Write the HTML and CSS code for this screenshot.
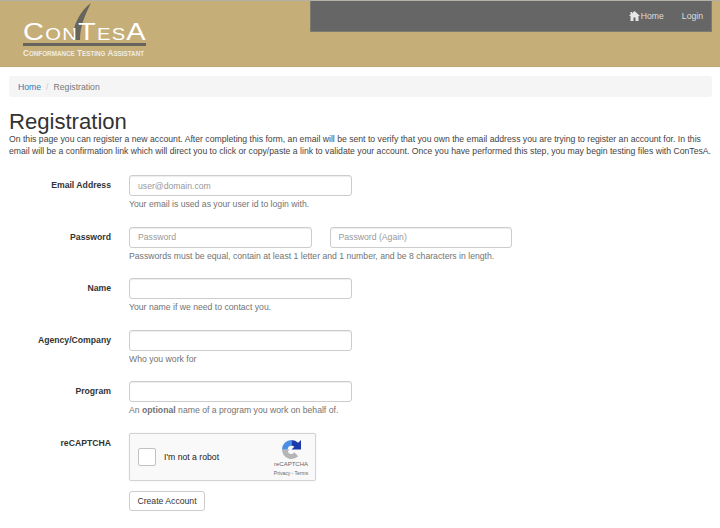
FILE: index.html
```html
<!DOCTYPE html>
<html lang="en">
<head>
<meta charset="utf-8">
<title>Registration</title>
<link rel="stylesheet" href="styles.css">
</head>
<body>
<header class="header">
  <a class="logo" href="#">
    <svg class="logo-tick" width="24" height="37" viewBox="0 0 24 37"><path d="M3 37C4 22 11 8 22 0C17 10 11 22 11 37Z" fill="#66645c"/></svg>
    <span class="logo-word"><span>C</span><small>ON</small><span>T</span><small>ES</small><span>A</span></span>
    <span class="logo-rule"></span>
    <span class="logo-sub">C<small>ONFORMANCE</small> T<small>ESTING</small> A<small>SSISTANT</small></span>
  </a>
  <nav class="nav">
    <a class="nav-link" href="#"><svg class="home-icon" width="11" height="10" viewBox="0 0 11 10"><path d="M5.500 0L11 5H9.500V10H6.500V6.500H4.500V10H1.500V5H0L1.500 3.600V1H3V2.300Z" fill="#e6e6e6"/></svg>Home</a>
    <a class="nav-link" href="#">Login</a>
  </nav>
</header>
<main class="main">
  <ol class="crumbs">
    <li><a href="#">Home</a></li>
    <li class="sep">/</li>
    <li class="current">Registration</li>
  </ol>
  <h1 class="title">Registration</h1>
  <p class="intro">On this page you can register a new account. After completing this form, an email will be sent to verify that you own the email address you are trying to register an account for. In this email will be a confirmation link which will direct you to click or copy/paste a link to validate your account. Once you have performed this step, you may begin testing files with ConTesA.</p>
  <form class="form">
    <div class="row">
      <label class="label">Email Address</label>
      <div class="field">
        <input class="input wide" placeholder="user@domain.com">
        <p class="help">Your email is used as your user id to login with.</p>
      </div>
    </div>
    <div class="row">
      <label class="label">Password</label>
      <div class="field">
        <div class="pair">
          <input class="input half" placeholder="Password">
          <input class="input half" placeholder="Password (Again)">
        </div>
        <p class="help">Passwords must be equal, contain at least 1 letter and 1 number, and be 8 characters in length.</p>
      </div>
    </div>
    <div class="row">
      <label class="label">Name</label>
      <div class="field">
        <input class="input wide">
        <p class="help">Your name if we need to contact you.</p>
      </div>
    </div>
    <div class="row">
      <label class="label">Agency/Company</label>
      <div class="field">
        <input class="input wide">
        <p class="help">Who you work for</p>
      </div>
    </div>
    <div class="row">
      <label class="label">Program</label>
      <div class="field">
        <input class="input wide">
        <p class="help">An <b>optional</b> name of a program you work on behalf of.</p>
      </div>
    </div>
    <div class="row row-captcha">
      <label class="label">reCAPTCHA</label>
      <div class="field">
        <div class="captcha">
          <span class="check"></span>
          <span class="robot">I'm not a robot</span>
          <div class="brand">
            <svg width="19" height="19" viewBox="0 0 20 20">
              <path d="M0 10H8L6 12A4 4 0 0 0 13 13L17 17A10 10 0 0 1 0 10Z" fill="#b5b5b5"/>
              <path d="M10 0A10 10 0 0 0 0 10H6A4 4 0 0 1 10 6Z" fill="#4a90e2"/>
              <path d="M10 0A10 10 0 0 1 17 3L20 0V10H10L13 7A4 4 0 0 0 10 6Z" fill="#1c3aa9"/>
            </svg>
            <span class="brand-name">reCAPTCHA</span>
            <span class="brand-links">Privacy - Terms</span>
          </div>
        </div>
        <button class="button" type="button">Create Account</button>
      </div>
    </div>
  </form>
</main>
</body>
</html>
```
FILE: styles.css
```css
* { box-sizing: border-box; }
html, body { margin: 0; padding: 0; }
body {
  width: 720px;
  height: 528px;
  overflow: hidden;
  background: #fff;
  color: #333;
  font-family: "Liberation Sans", Arial, sans-serif;
  font-size: 8.670px;
  line-height: 12px;
}
a { text-decoration: none; }
.header {
  height: 67px;
  background: #c6ae79;
  border-top: 1px solid #b4b0a6;
  border-bottom: 1px solid #bda873;
  display: flex;
  justify-content: space-between;
  align-items: flex-start;
  padding-right: 8px;
}
.logo {
  position: relative;
  display: block;
  width: 123px;
  margin: 21px 0 0 23px;
  color: #fff;
}
.logo-tick { position: absolute; left: 46px; top: -19px; }
.logo-word {
  position: relative;
  display: block;
  font-size: 23px;
  line-height: 20px;
  height: 20px;
  letter-spacing: 1px;
  white-space: nowrap;
  transform: scaleX(1.26);
  transform-origin: left center;
}
.logo-word small { font-size: 16px; }
.logo-rule { display: block; height: 3px; margin-top: 1px; background: #66645c; position: relative; }
.logo-sub {
  display: block;
  margin-top: 3px;
  font-size: 8.200px;
  line-height: 10px;
  white-space: nowrap;
  font-weight: bold;
  color: #f1ece0;
}
.logo-sub small { font-size: 6.300px; }
.nav {
  width: 402px;
  height: 31px;
  background: #666;
  border: 1px solid #7d7a70;
  border-top: 0;
  display: flex;
  justify-content: flex-end;
  align-items: center;
  gap: 18px;
  padding: 0 8px 1px 0;
}
.nav-link { display: flex; align-items: center; color: #ddd; }
.home-icon { margin-right: 1px; }
.main { padding: 9px 8px 0 9px; }
.crumbs {
  display: flex;
  gap: 5px;
  list-style: none;
  margin: 0 0 14px;
  padding: 0 9px;
  height: 21px;
  align-items: center;
  background: #f5f5f5;
  border-radius: 3px;
}
.crumbs a { color: #337ab7; }
.sep { color: #ccc; }
.current { color: #777; }
.title {
  margin: 0;
  height: 22px;
  font-size: 22.100px;
  font-weight: 400;
  line-height: 22px;
}
.intro { margin: 0 0 18px; width: 703px; color: #444; }
.form { display: flex; flex-direction: column; }
.row { display: flex; gap: 18px; height: 51.600px; }
.label {
  width: 102px;
  padding-top: 4px;
  text-align: right;
  font-weight: bold;
  white-space: nowrap;
}
.field { display: flex; flex-direction: column; }
.input {
  display: block;
  height: 21px;
  padding: 0 8px;
  border: 1px solid #ccc;
  border-radius: 3px;
  background: #fff;
  font: 8.670px "Liberation Sans", Arial, sans-serif;
  color: #555;
  box-shadow: inset 0 1px 1px rgba(0, 0, 0, .075);
}
.input::placeholder { color: #999; opacity: 1; }
.wide { width: 223px; }
.half { width: 182.500px; }
.pair { display: flex; gap: 18px; }
.help { margin: 2px 0 0; color: #737373; white-space: nowrap; }
.row-captcha { height: auto; }
.captcha {
  position: relative;
  display: flex;
  align-items: center;
  width: 187px;
  height: 48px;
  padding-left: 8px;
  background: #f9f9f9;
  border: 1px solid #d3d3d3;
  border-radius: 2px;
  box-shadow: 0 0 2px rgba(0, 0, 0, .08);
}
.check {
  width: 18px;
  height: 18px;
  background: #fff;
  border: 1px solid #c1c1c1;
  border-radius: 2px;
}
.robot { margin-left: 8px; color: #222; }
.brand {
  position: absolute;
  right: 7px;
  top: 6px;
  width: 34px;
  display: flex;
  flex-direction: column;
  align-items: center;
}
.brand-name { margin-top: 1px; font-size: 6px; line-height: 9px; color: #666; white-space: nowrap; }
.brand-links { margin-top: 1px; font-size: 5px; line-height: 7px; color: #666; white-space: nowrap; }
.button {
  width: 76px;
  height: 20px;
  margin-top: 10px;
  padding: 0;
  background: #fff;
  border: 1px solid #ccc;
  border-radius: 3px;
  color: #333;
  font: 8.670px "Liberation Sans", Arial, sans-serif;
}
```
